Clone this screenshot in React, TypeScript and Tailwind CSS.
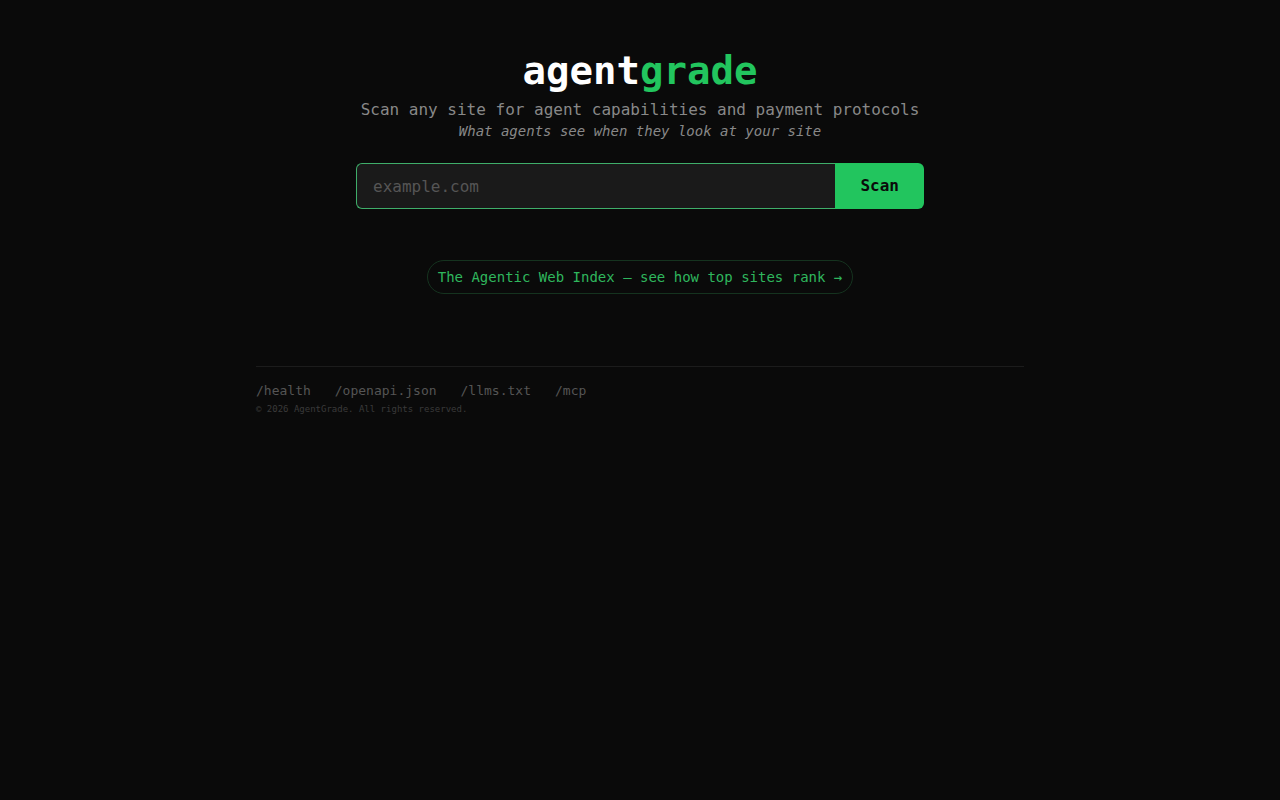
import { useState } from "react";

const footerLinks = ["/health", "/openapi.json", "/llms.txt", "/mcp"];

const ScanForm = () => {
  const [site, setSite] = useState("");

  return (
    <form className="mx-auto mt-[23px] flex w-full max-w-[568px]" onSubmit={(e) => e.preventDefault()}>
      <input
        type="text"
        aria-label="Site to scan"
        placeholder="example.com"
        value={site}
        onChange={(e) => setSite(e.target.value)}
        className="h-[46px] min-w-0 flex-1 rounded-l-md border border-r-0 border-[#3fae6a] bg-[#1a1a1a] px-4 text-base text-white outline-none placeholder:text-[#555]"
      />
      <button type="submit" className="h-[46px] rounded-r-md bg-[#22c55e] px-[25px] text-base font-bold text-[#0a0a0a]">
        Scan
      </button>
    </form>
  );
};

const App = () => {
  return (
    <div className="min-h-screen bg-[#0a0a0a] px-4 pt-12 font-['DejaVu_Sans_Mono',monospace]">
      <div className="mx-auto max-w-3xl">
        <header className="text-center">
          <h1 className="text-[39px] leading-[46px] font-bold text-white">
            agent<span className="text-[#22c55e]">grade</span>
          </h1>
          <p className="mt-1 text-base leading-6 text-[#888]">
            Scan any site for agent capabilities and payment protocols
          </p>
          <p className="text-sm leading-[18px] text-[#888] italic">What agents see when they look at your site</p>
        </header>

        <ScanForm />

        <div className="mt-[51px] text-center">
          <a
            href="#index"
            className="inline-block rounded-full border border-[#15331f] px-[10px] py-1.5 text-sm leading-5 text-[#2fb65d]"
          >
            The Agentic Web Index — see how top sites rank →
          </a>
        </div>

        <footer className="mt-18 border-t border-[#1c1c1c] pt-4">
          <nav className="flex flex-wrap gap-x-6 text-[13px] leading-4 text-[#555]">
            {footerLinks.map((link) => (
              <a key={link} href={link}>
                {link}
              </a>
            ))}
          </nav>
          <p className="mt-0.5 text-[9px] leading-4 text-[#3a3a3a]">© 2026 AgentGrade. All rights reserved.</p>
        </footer>
      </div>
    </div>
  );
};

export default App;
